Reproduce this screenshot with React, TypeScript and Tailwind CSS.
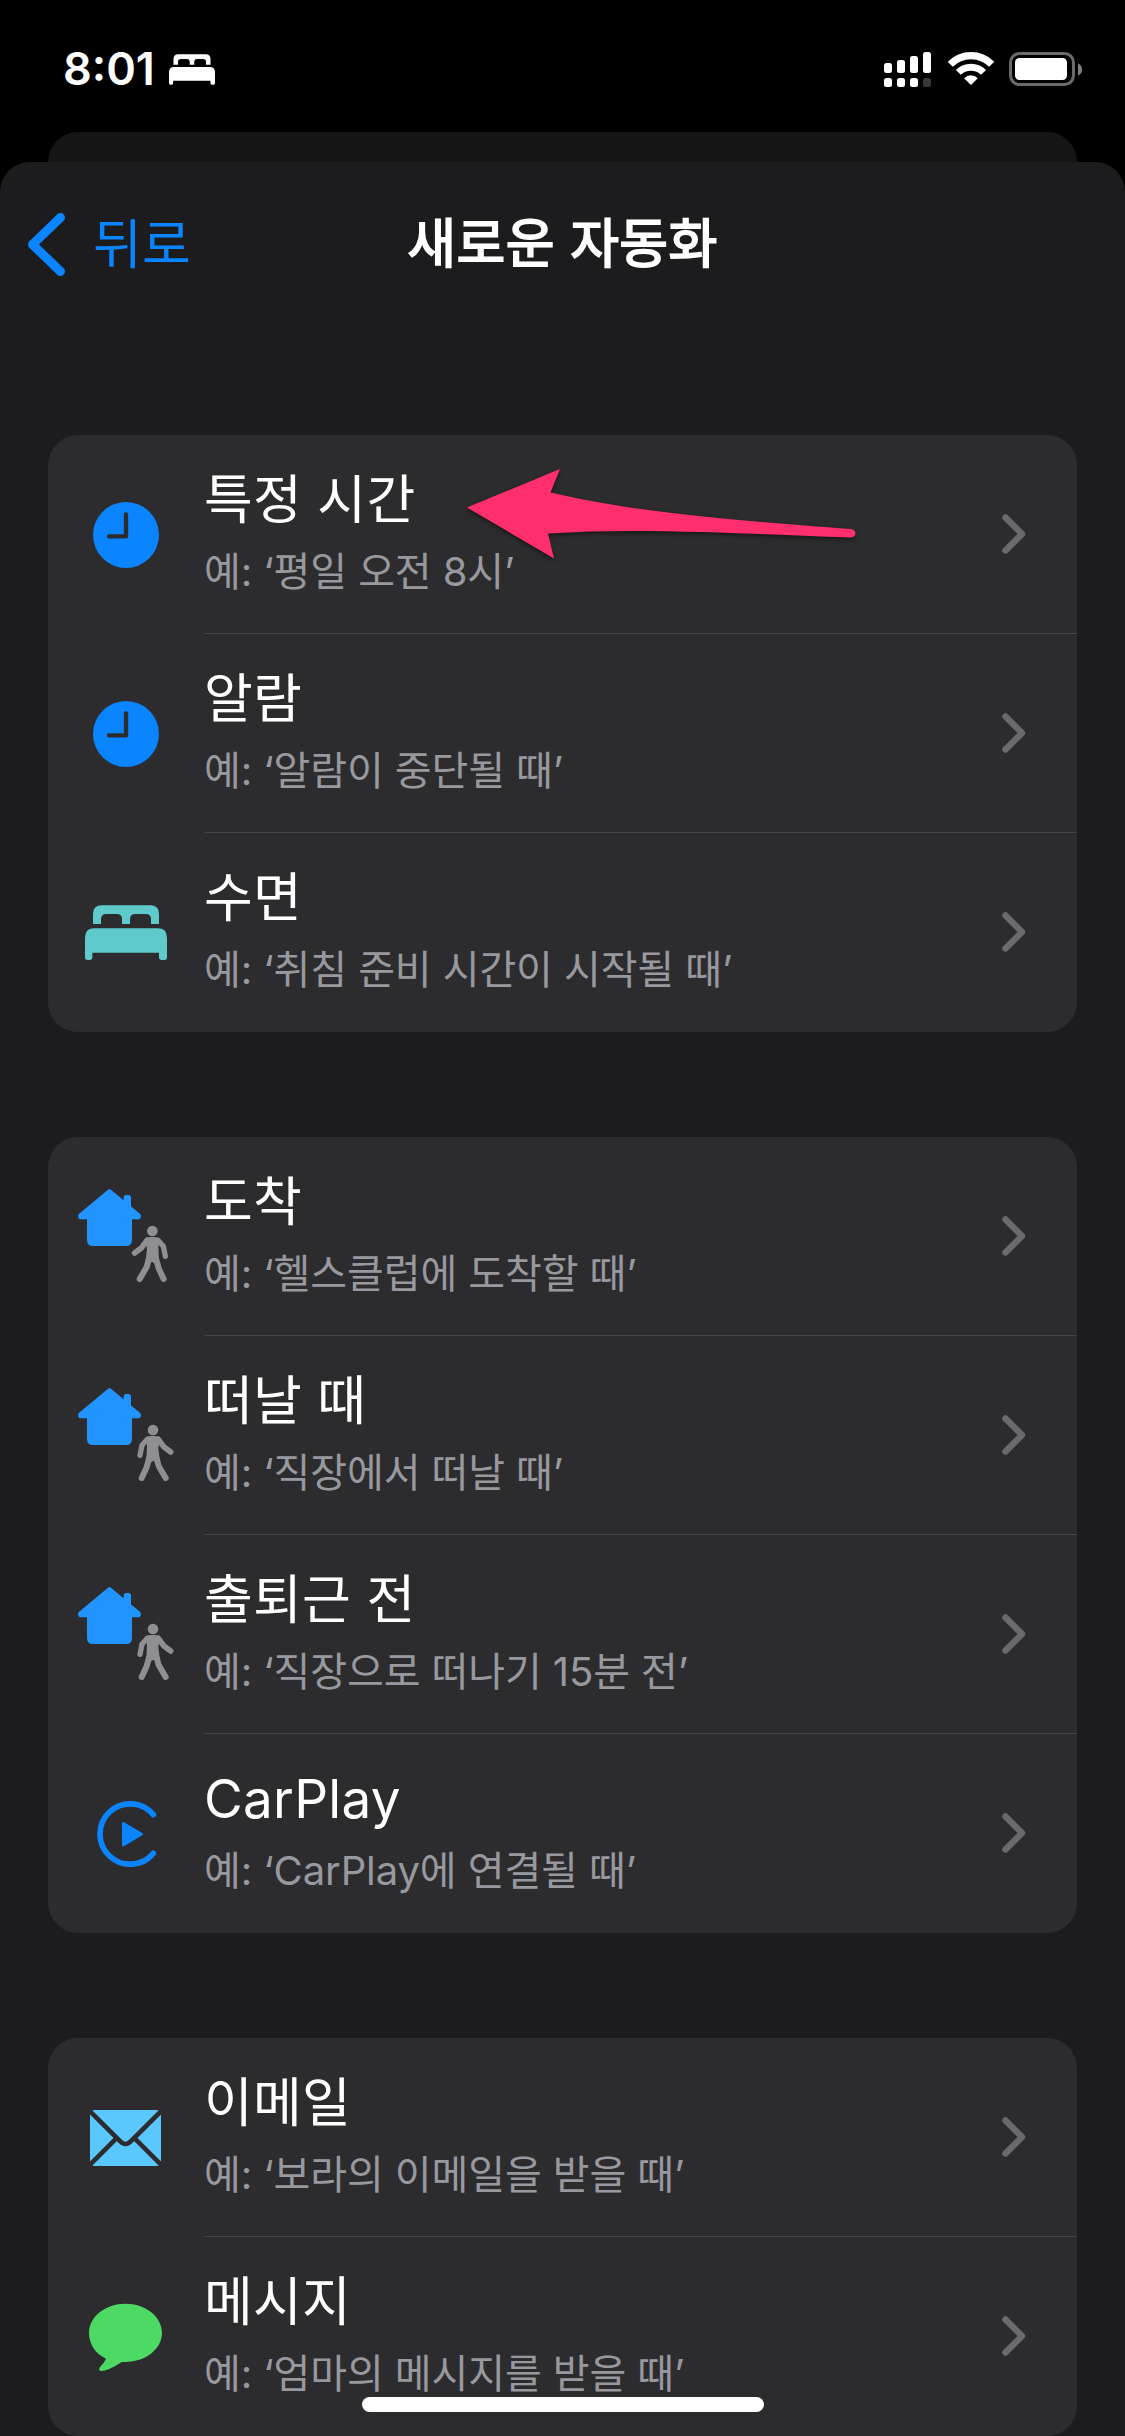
import type { ReactNode } from "react";

type Item = {
  title: string;
  example: string;
  icon: ReactNode;
};

function BedShape() {
  return (
    <>
      <path d="M24 56V26Q24 0 50 0H196Q222 0 222 26V56H198V42Q198 26 182 26H151Q135 26 135 42V56H111V42Q111 26 95 26H64Q48 26 48 42V56Z" />
      <path d="M0 97Q0 69 28 69H218Q246 69 246 97V156Q246 164 238 164H230Q222 164 222 156V142H22V156Q22 164 14 164H8Q0 164 0 156Z" />
    </>
  );
}

function IconBox({ children }: { children: ReactNode }) {
  return (
    <svg viewBox="0 0 288 288" className="h-24 w-24 shrink-0">
      {children}
    </svg>
  );
}

function ClockIcon() {
  return (
    <IconBox>
      <circle cx="144" cy="144" r="99" fill="#0a84ff" />
      <path
        d="M144 82V148H93"
        fill="none"
        stroke="#2c2c2e"
        strokeWidth="13"
        strokeLinecap="round"
        strokeLinejoin="round"
      />
    </IconBox>
  );
}

function SleepIcon() {
  return (
    <IconBox>
      <g transform="translate(21 61)" fill="#5ecacb">
        <BedShape />
      </g>
    </IconBox>
  );
}

function HomeWalkIcon({ leaving = false }: { leaving?: boolean }) {
  return (
    <IconBox>
      <g fill="#2194ff">
        <path
          d="M94.5 6L6 79V85H183V79Z"
          stroke="#2194ff"
          strokeWidth="11"
          strokeLinejoin="round"
        />
        <path d="M27 80H162V153Q162 171 144 171H45Q27 171 27 153Z" />
        <path d="M137 50V26Q137 18 145 18H151Q159 18 159 26V66Z" />
      </g>
      <g
        transform={leaving ? "translate(448 0) scale(-1 1)" : undefined}
        fill="none"
        stroke="#8e8e93"
        strokeLinecap="round"
        strokeLinejoin="round"
      >
        <circle cx="223" cy="126" r="16" fill="#8e8e93" stroke="none" />
        <path
          d="M202 150Q208 144 216 144H230Q240 144 247 151L241 172L243 218L233 226L222 218L212 226L203 214L207 180Z"
          fill="#8e8e93"
          stroke="none"
        />
        <path d="M207 154L191 176L170 192" strokeWidth="17" />
        <path d="M240 154L256 172L262 202" strokeWidth="16" />
        <path d="M213 208L206 234L185 270" strokeWidth="18" />
        <path d="M234 208L242 238L257 270" strokeWidth="18" />
      </g>
    </IconBox>
  );
}

function CarPlayIcon() {
  return (
    <IconBox>
      <path
        d="M226 86A90.5 90.5 0 1 0 226 202"
        fill="none"
        stroke="#0a84ff"
        strokeWidth="17"
        strokeLinecap="round"
      />
      <path
        d="M136 112V177L191 144.5Z"
        fill="#0a84ff"
        stroke="#0a84ff"
        strokeWidth="8"
        strokeLinejoin="round"
      />
    </IconBox>
  );
}

function MailIcon() {
  return (
    <IconBox>
      <rect x="36" y="60" width="213" height="168" rx="14" fill="#5ac8ff" />
      <g fill="none" stroke="#2c2c2e" strokeWidth="14">
        <path d="M34 62L126 153Q142.5 171 159 153L251 62" />
        <path d="M34 226L118 142M251 226L167 142" />
      </g>
    </IconBox>
  );
}

function MessageIcon() {
  return (
    <IconBox>
      <path
        d="M142.5 44C203 44 252 83 252 131.500C252 180 203 219 142.500 219Q136 219 131 219C113 231 90 245 70 246Q59 245 66 234Q78 223 84 209C53 195 33 166 33 131.500C33 83 82 44 142.500 44Z"
        fill="#4cd964"
      />
    </IconBox>
  );
}

const groups: Item[][] = [
  [
    { title: "특정 시간", example: "예: ‘평일 오전 8시’", icon: <ClockIcon /> },
    { title: "알람", example: "예: ‘알람이 중단될 때’", icon: <ClockIcon /> },
    { title: "수면", example: "예: ‘취침 준비 시간이 시작될 때’", icon: <SleepIcon /> },
  ],
  [
    { title: "도착", example: "예: ‘헬스클럽에 도착할 때’", icon: <HomeWalkIcon /> },
    { title: "떠날 때", example: "예: ‘직장에서 떠날 때’", icon: <HomeWalkIcon leaving /> },
    { title: "출퇴근 전", example: "예: ‘직장으로 떠나기 15분 전’", icon: <HomeWalkIcon leaving /> },
    { title: "CarPlay", example: "예: ‘CarPlay에 연결될 때’", icon: <CarPlayIcon /> },
  ],
  [
    { title: "이메일", example: "예: ‘보라의 이메일을 받을 때’", icon: <MailIcon /> },
    { title: "메시지", example: "예: ‘엄마의 메시지를 받을 때’", icon: <MessageIcon /> },
  ],
];

function StatusIcons() {
  return (
    <svg viewBox="0 0 198 36" className="h-9 w-[198px] fill-white">
      {/* Dual SIM signal */}
      <rect x="0" y="11" width="8" height="10" rx="2.5" />
      <rect x="13" y="8" width="8" height="13" rx="2.5" />
      <rect x="26" y="4" width="8" height="17" rx="2.5" />
      <rect x="39" y="0" width="8" height="21" rx="2.5" />
      <rect x="0" y="26" width="8" height="9" rx="2.5" />
      <rect x="13" y="26" width="8" height="9" rx="2.5" />
      <rect x="26" y="26" width="8" height="9" rx="2.5" />
      <rect x="39" y="26" width="8" height="9" rx="2.5" fill="#383838" />
      {/* Wi-Fi */}
      <g transform="translate(64.3 0) scale(0.3333)">
        <path d="M5.8 36.8A88 88 0 0 1 130.2 36.8" fill="none" stroke="#fff" strokeWidth="22" />
        <path d="M30.2 61.2A53.5 53.5 0 0 1 105.8 61.2" fill="none" stroke="#fff" strokeWidth="21" />
        <path d="M68 99L47.5 78.5A29 29 0 0 1 88.5 78.5Z" />
      </g>
      {/* Battery */}
      <rect x="126.5" y="1.5" width="63" height="31" rx="9" fill="none" stroke="#6a6a6a" strokeWidth="3" />
      <rect x="131" y="6" width="52" height="22" rx="4.5" />
      <path d="M194 11.5Q198 13 198 17.5Q198 22 194 23.5Z" fill="#808080" />
    </svg>
  );
}

function Row({ item, last }: { item: Item; last: boolean }) {
  return (
    <div className="flex h-[199px] items-stretch pl-[30px]">
      <div className="flex w-[126px] shrink-0 items-start pt-[52px]">{item.icon}</div>
      <div
        className={`flex flex-1 items-start justify-between border-b ${
          last ? "border-transparent" : "border-[#444447]"
        }`}
      >
        <div className="pt-[33px] whitespace-nowrap">
          <p className="text-[53px] leading-[64px] tracking-[0.3px] text-white">{item.title}</p>
          <p className="mt-4 text-[40px] leading-[48px] tracking-[-0.1px] text-[#98989f]">
            {item.example}
          </p>
        </div>
        <svg
          viewBox="0 0 24 40"
          className="mt-[79px] mr-[51px] h-10 w-6 fill-none stroke-[#69696e] stroke-[6.5]"
          strokeLinecap="round"
          strokeLinejoin="round"
        >
          <path d="M3.5 3.5L20 20L3.5 36.5" />
        </svg>
      </div>
    </div>
  );
}

function Arrow() {
  return (
    <svg
      viewBox="460 460 400 106"
      className="absolute top-[25px] left-[412px] h-[106px] w-[400px] overflow-visible drop-shadow-[0_2px_2px_rgba(0,0,0,0.5)]"
    >
      <path
        d="M467 507.5L560 469L550.5 492.5C640 514 760 522 851 529Q855.5 530 855.5 533.5Q855 537.5 850 537.5C760 534.5 640 527 548 533.5L554 558.5Z"
        fill="#ff2f6e"
      />
    </svg>
  );
}

export default function App() {
  return (
    <div className="relative flex h-[2436px] w-[1125px] flex-col overflow-hidden bg-black font-['Inter','Noto_Sans_CJK_KR',sans-serif] text-white">
      <div className="flex h-[132px] shrink-0 items-start justify-between pt-[52px] pr-[43px] pl-[63px]">
        <div className="flex items-start">
          <span className="-mt-[10px] w-[106px] text-[45px] leading-[54px] font-semibold">8:01</span>
          <svg viewBox="0 0 246 164" className="mt-[2px] h-[31px] w-[46px] fill-white">
            <BedShape />
          </svg>
        </div>
        <StatusIcons />
      </div>

      {/* Sheet underneath */}
      <div className="mx-12 h-[30px] shrink-0 rounded-t-[30px] bg-[#151515]" />

      <div className="flex-1 rounded-t-[30px] bg-[#1c1c1e]">
        <header className="grid h-[273px] grid-cols-3 items-start pt-[51px]">
          <button className="flex items-start gap-[28px] pl-[28px] text-[#0a84ff]">
            <svg
              viewBox="0 0 37 63"
              className="h-[63px] w-[37px] fill-none stroke-[#0a84ff] stroke-[9]"
              strokeLinecap="round"
              strokeLinejoin="round"
            >
              <path d="M32.5 4.5L4.5 31.5L32.5 58.5" />
            </svg>
            <span className="text-[53px] leading-[64px] tracking-[0.3px]">뒤로</span>
          </button>
          <h1 className="-mt-px text-center text-[53px] leading-[64px] tracking-[0.4px] whitespace-nowrap [-webkit-text-stroke:1.8px_white]">
            새로운 자동화
          </h1>
        </header>

        <main className="flex flex-col gap-[105px] px-12">
          {groups.map((group, i) => (
            <section key={i} className="relative rounded-[30px] bg-[#2c2c2e]">
              {group.map((item, j) => (
                <Row key={item.title} item={item} last={j === group.length - 1} />
              ))}
              {i === 0 && <Arrow />}
            </section>
          ))}
        </main>
      </div>

      {/* Home indicator */}
      <div className="absolute bottom-6 left-[362px] h-[15px] w-[402px] rounded-full bg-white" />
    </div>
  );
}
